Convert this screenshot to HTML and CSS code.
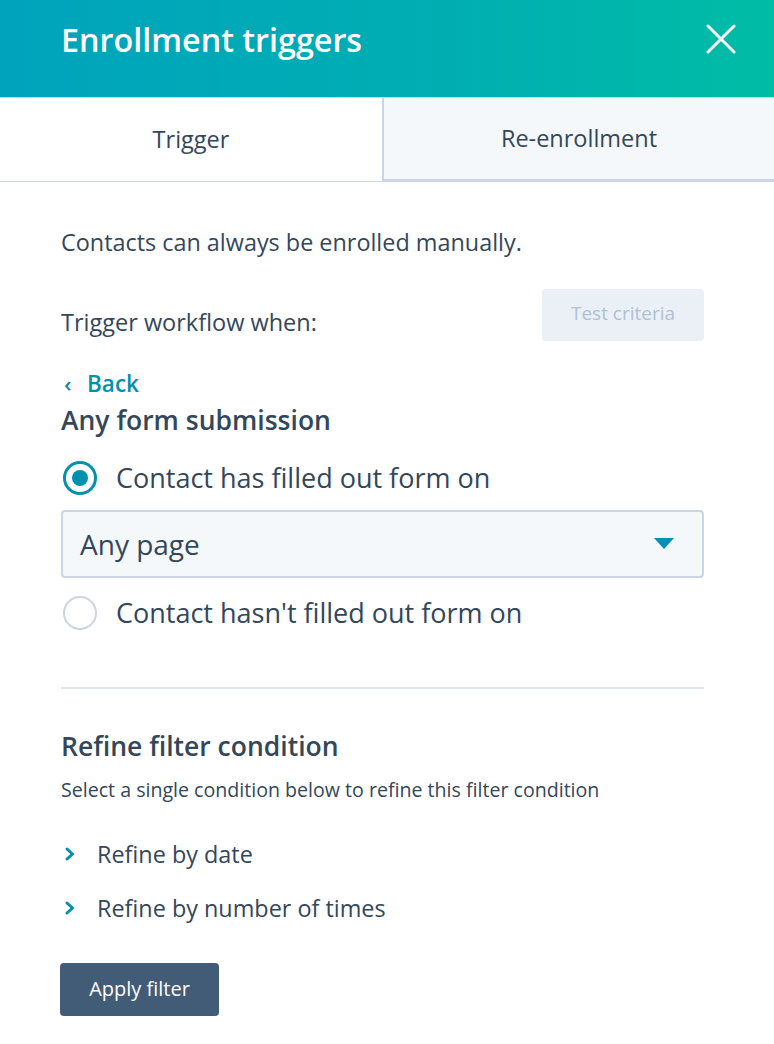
FILE: index.html
```html
<!DOCTYPE html>
<html>
<head>
<meta charset="utf-8">
<link rel="stylesheet" href="styles.css">
</head>
<body>
<div class="panel">
  <header class="header">
    <h1 class="title">Enrollment triggers</h1>
    <svg class="close" width="30" height="30" viewBox="0 0 30 30"><path d="M2 2 L28 28 M28 2 L2 28" stroke="#fff" stroke-width="3" stroke-linecap="round"/></svg>
  </header>
  <nav class="tabs">
    <div class="tab tab-active">Trigger</div>
    <div class="tab tab-inactive">Re-enrollment</div>
  </nav>
  <main class="content">
    <p class="note">Contacts can always be enrolled manually.</p>
    <div class="trigger-row">
      <span class="trigger-label">Trigger workflow when:</span>
      <button class="test-btn">Test criteria</button>
    </div>
    <a class="back"><span class="back-caret">‹</span>Back</a>
    <h2 class="section-title">Any form submission</h2>
    <label class="radio-row">
      <span class="radio radio-on"><span class="radio-dot"></span></span>
      <span class="radio-text">Contact has filled out form on</span>
    </label>
    <div class="select">
      <span class="select-text">Any page</span>
      <svg class="caret" width="20" height="12" viewBox="0 0 20 12"><path d="M0 0 H20 L10 11 Z" fill="#0091ae"/></svg>
    </div>
    <label class="radio-row radio-row-2">
      <span class="radio"></span>
      <span class="radio-text">Contact hasn't filled out form on</span>
    </label>
    <hr class="divider">
    <h2 class="refine-title">Refine filter condition</h2>
    <p class="refine-desc">Select a single condition below to refine this filter condition</p>
    <ul class="refine-list">
      <li class="refine-item"><svg class="chev" width="12" height="16" viewBox="0 0 12 16"><path d="M3 3 L8.5 8 L3 13" stroke="#0091ae" stroke-width="3" fill="none" stroke-linecap="round" stroke-linejoin="round"/></svg>Refine by date</li>
      <li class="refine-item"><svg class="chev" width="12" height="16" viewBox="0 0 12 16"><path d="M3 3 L8.5 8 L3 13" stroke="#0091ae" stroke-width="3" fill="none" stroke-linecap="round" stroke-linejoin="round"/></svg>Refine by number of times</li>
    </ul>
    <button class="apply-btn">Apply filter</button>
  </main>
</div>
</body>
</html>
```
FILE: styles.css
```css
* { box-sizing: border-box; }
html, body { margin: 0; padding: 0; background: #fff; }
body {
  font-family: "Open Sans", Lato, "Liberation Sans", sans-serif;
  color: #33475b;
  width: 774px;
}
.header {
  height: 97px;
  background: linear-gradient(90deg, #00a3bc 0%, #00afb2 60%, #00bda5 100%);
  display: flex;
  align-items: center;
  justify-content: space-between;
  padding: 0 38px 20px 61px;
}
.title {
  margin: 0;
  color: #fff;
  font-size: 32.3px;
  font-weight: 600;
  line-height: 40px;
}
.tabs {
  display: flex;
  height: 85px;
}
.tab {
  flex: 0 0 auto;
  display: flex;
  align-items: center;
  justify-content: center;
  font-size: 23.5px;
  color: #33475b;
  padding-bottom: 2px;
}
.tab-active {
  width: 382px;
  background: #fff;
  border-bottom: 1px solid #cbd6e2;
  border-top: 1px solid #cbd6e2;
}
.tab-inactive {
  flex: 1;
  background: #f5f8fa;
  border-left: 2px solid #cbd6e2;
  border-bottom: 3px solid #cbd6e2;
  border-top: 1px solid #cbd6e2;
}
.content {
  padding: 45px 70px 0 61px;
}
.note {
  margin: 0;
  font-size: 23.4px;
  line-height: 30px;
}
.trigger-row {
  display: flex;
  justify-content: space-between;
  align-items: center;
  margin-top: 32px;
}
.trigger-label {
  font-size: 23.5px;
  font-weight: 500;
  line-height: 30px;
  padding-top: 14px;
}
.test-btn {
  width: 162px;
  height: 52px;
  border: none;
  border-radius: 4px;
  background: #eaf0f6;
  color: #b0c1d4;
  font-family: inherit;
  font-size: 19px;
  padding: 0 0 4px;
}
.back {
  display: block;
  margin-top: 28px;
  color: #0091ae;
  font-size: 22.5px;
  font-weight: 600;
  line-height: 28px;
}
.back-caret {
  display: inline-block;
  width: 26px;
  padding-left: 3px;
  font-size: 22px;
}
.section-title {
  margin: 6px 0 0;
  font-size: 26.5px;
  font-weight: 600;
  line-height: 32px;
}
.radio-row {
  display: flex;
  align-items: center;
  margin-top: 24px;
  gap: 19px;
}
.radio {
  flex: 0 0 auto;
  width: 34px;
  height: 34px;
  border-radius: 50%;
  border: 2px solid #cbd6e2;
  background: #fff;
  display: flex;
  align-items: center;
  justify-content: center;
  margin-left: 2px;
}
.radio-on { border: 3px solid #0091ae; }
.radio-dot {
  width: 16px;
  height: 16px;
  border-radius: 50%;
  background: #0091ae;
}
.radio-text {
  font-size: 27px;
  line-height: 36px;
}
.select {
  margin-top: 14px;
  height: 68px;
  border: 2px solid #cbd6e2;
  border-radius: 4px;
  background: #f5f8fa;
  display: flex;
  align-items: center;
  justify-content: space-between;
  padding: 0 28px 0 17px;
}
.select-text { font-size: 28px; line-height: 36px; }
.radio-row-2 { margin-top: 17px; }
.divider {
  border: none;
  border-top: 2px solid #dfe3eb;
  margin: 56px 0 0;
}
.refine-title {
  margin: 41px 0 0;
  font-size: 26.5px;
  font-weight: 600;
  line-height: 32px;
}
.refine-desc {
  margin: 15px 0 0;
  font-size: 19.6px;
  line-height: 25px;
}
.refine-list {
  list-style: none;
  margin: 37px 0 0;
  padding: 0;
}
.refine-item {
  display: flex;
  align-items: center;
  font-size: 23.4px;
  height: 30px;
  margin-bottom: 24px;
}
.chev { margin: 0 21px 0 3px; }
.apply-btn {
  margin-top: 16px;
  margin-left: -1px;
  width: 159px;
  height: 53px;
  border: none;
  border-radius: 4px;
  background: #425b76;
  color: #fff;
  font-family: inherit;
  font-size: 20px;
  padding-bottom: 4px;
}
```
